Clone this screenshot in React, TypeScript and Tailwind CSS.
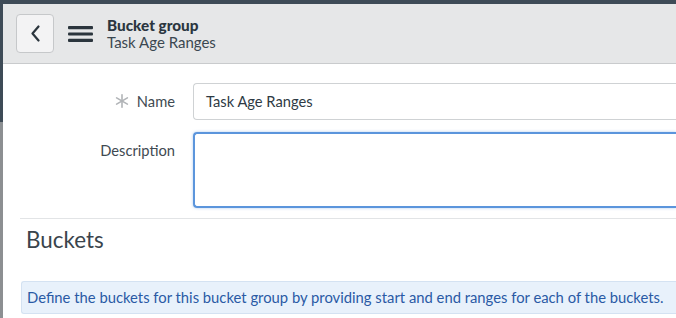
import React from 'react';

function MenuIcon() {
  return (
    <svg width="25" height="16" viewBox="0 0 25 16" className="shrink-0">
      <rect x="0" y="0" width="25" height="3.2" rx="1" fill="#2b353d" />
      <rect x="0" y="6.4" width="25" height="3.2" rx="1" fill="#2b353d" />
      <rect x="0" y="12.8" width="25" height="3.2" rx="1" fill="#2b353d" />
    </svg>
  );
}

function BackIcon() {
  return (
    <svg width="11" height="17" viewBox="0 0 11 17">
      <path d="M8.5 1.5 L2.5 8.5 L8.5 15.5" fill="none" stroke="#2b353d" strokeWidth="2.2" strokeLinecap="round" strokeLinejoin="round" />
    </svg>
  );
}

function RequiredMark() {
  return (
    <svg width="14" height="14" viewBox="0 0 14 14" className="shrink-0">
      <g stroke="#b1b4b7" strokeWidth="1.6" strokeLinecap="round">
        <line x1="7" y1="0.8" x2="7" y2="13.2" />
        <line x1="1.6" y1="3.9" x2="12.4" y2="10.1" />
        <line x1="1.6" y1="10.1" x2="12.4" y2="3.9" />
      </g>
    </svg>
  );
}

export default function App() {
  return (
    <div
      className="flex h-[318px] w-[676px] flex-col overflow-hidden bg-white text-[#333]"
      style={{ fontFamily: 'Lato, "Open Sans", sans-serif' }}
    >
      <div className="h-[4px] shrink-0 bg-[#3e4b57]" />
      <div className="flex min-h-0 flex-1">
        <div className="flex w-[3px] shrink-0 flex-col">
          <div className="h-[118px] bg-[#3e4b57]" />
          <div className="flex-1 bg-[#8c8f92]" />
        </div>
        <div className="flex min-w-0 flex-1 flex-col">
          <header className="flex h-[60px] shrink-0 items-center gap-[14px] border-b border-[#c9cbcd] bg-[#e6e7e8] pl-[13px]">
            <button
              type="button"
              className="flex h-[39px] w-[38px] items-center justify-center rounded-[4px] border border-[#c6c8ca] bg-[#f3f3f4]"
            >
              <BackIcon />
            </button>
            <MenuIcon />
            <div className="flex flex-col leading-[17px]">
              <span className="text-[15.3px] font-black text-[#2b3640]">Bucket group</span>
              <span className="text-[15px] text-[#3b4750]">Task Age Ranges</span>
            </div>
          </header>

          <div className="flex flex-col pt-[19px]">
            <div className="flex items-center">
              <div className="flex w-[172px] items-center justify-end gap-[8px] text-[14.7px] text-[#404a52]">
                <RequiredMark />
                <span>Name</span>
              </div>
              <div className="ml-[18px] flex h-[37px] flex-1 items-center rounded-l-[4px] border border-r-0 border-[#cfd2d4] pl-[12px] text-[14.7px] text-[#2e3a44]">
                Task Age Ranges
              </div>
            </div>
            <div className="mt-[12px] flex items-start">
              <div className="w-[172px] pt-[7px] text-right text-[14.7px] text-[#404a52]">Description</div>
              <div className="ml-[18px] h-[76px] flex-1 rounded-l-[4px] border-2 border-r-0 border-[#5b95dc] shadow-[0_0_3px_rgba(91,149,220,0.5)]" />
            </div>
          </div>

          <div className="ml-[17px] mt-[10px] border-t border-[#e2e4e6]" />
          <h2 className="ml-[23px] mt-[7px] text-[22.4px] leading-[28px] text-[#3a444c]">Buckets</h2>
          <div className="ml-[18px] mt-[27px] flex h-[33px] items-center rounded-l-[3px] border border-r-0 border-[#d4e2f2] bg-[#e8f1fb] pl-[5px] text-[14.8px] text-[#2a5aa5]">
            Define the buckets for this bucket group by providing start and end ranges for each of the buckets.
          </div>
        </div>
      </div>
    </div>
  );
}
